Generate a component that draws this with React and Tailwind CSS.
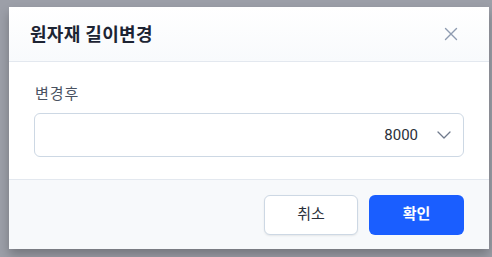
export default function App() {
  const font = { fontFamily: 'Roboto, "Noto Sans CJK KR", sans-serif' };
  return (
    <div className="w-[492px] h-[257px] bg-[#9c9fa8] pt-[7px] pl-[9px] overflow-hidden" style={font}>
      <div className="w-[480px] h-[242px] bg-white flex flex-col shadow-[0_6px_10px_rgba(0,0,0,0.25)]">
        <div className="h-[55px] flex items-center justify-between pl-[21px] pr-[31px] border-b border-[#e3e8ef] bg-gradient-to-b from-white to-[#f8fafc]">
          <span className="text-[18px] font-bold text-[#1d2433] tracking-[0.3px]">원자재 길이변경</span>
          <svg width="14" height="14" viewBox="0 0 14 14" fill="none" stroke="#8e9bb0" strokeWidth="1.4" strokeLinecap="round">
            <path d="M1.5 1.5 L12.5 12.5 M12.5 1.5 L1.5 12.5" />
          </svg>
        </div>
        <div className="flex-1 px-[25px] pt-[21px]">
          <div className="text-[15px] text-[#4a5262] leading-[22px] mb-[8px] pl-[1px] tracking-[1px]">변경후</div>
          <div className="h-[44px] border border-[#cdd8e4] rounded-[6px] flex items-center justify-end pr-[12px]">
            <span className="text-[15px] text-[#2a2f3a] mr-[19px]">8000</span>
            <svg width="14" height="8" viewBox="0 0 14 8" fill="none" stroke="#6f7a8c" strokeWidth="1.3" strokeLinecap="round" strokeLinejoin="round">
              <path d="M1 1 L7 7 L13 1" />
            </svg>
          </div>
        </div>
        <div className="h-[70px] border-t border-[#e3e8ef] bg-[#f7f9fb] flex items-center justify-end pr-[25px] gap-[11px]">
          <button className="w-[94px] h-[40px] rounded-[6px] bg-white border border-[#cdd8e4] shadow-[0_1px_2px_rgba(0,0,0,0.08)] text-[15px] text-[#2a2f3a]">취소</button>
          <button className="w-[95px] h-[40px] rounded-[6px] bg-[#1a5eff] text-[15px] font-bold text-white">확인</button>
        </div>
      </div>
    </div>
  );
}
